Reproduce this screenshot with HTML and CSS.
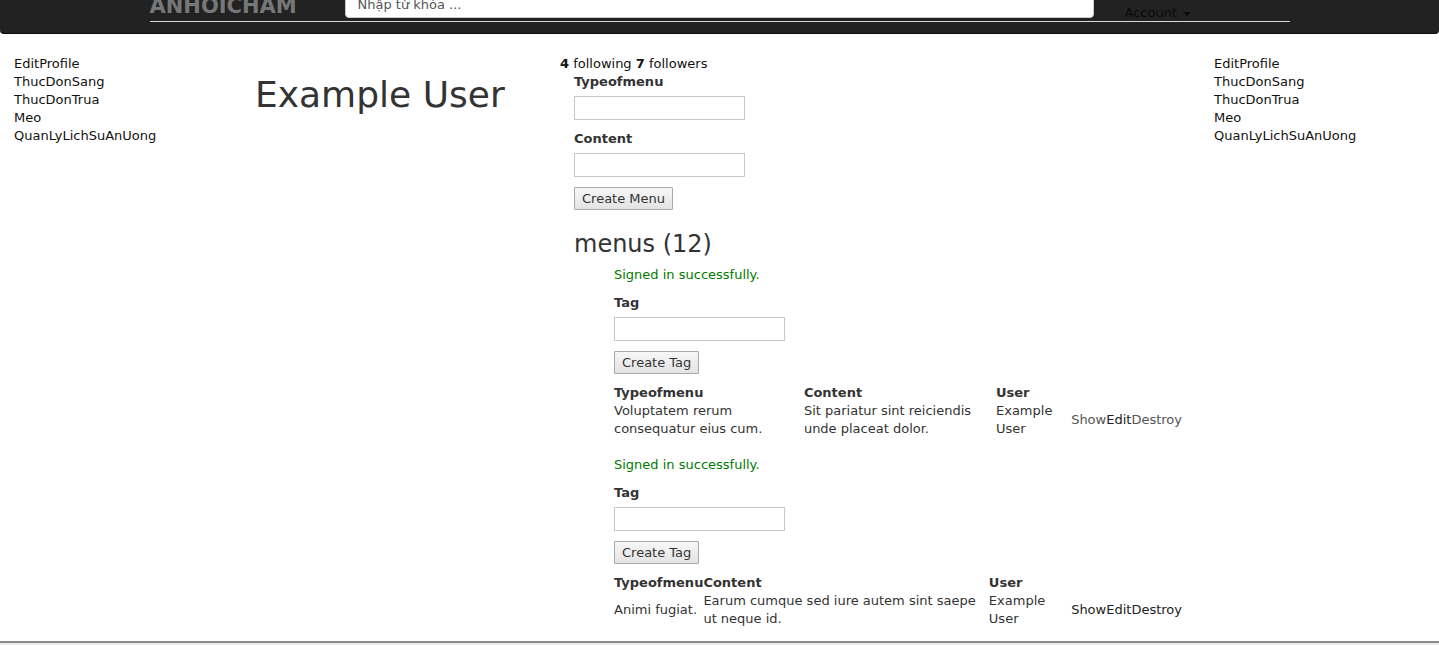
FILE: index.html
```html
<!DOCTYPE html>
<html lang="vi">
<head>
<meta charset="utf-8">
<title>Example User</title>
<link rel="stylesheet" href="styles.css">
</head>
<body>
<header class="navbar">
  <div class="nav-inner">
    <a class="brand" href="#">ANHOICHAM</a>
    <input class="search" type="text" placeholder="Nhập từ khóa ...">
    <a class="account" href="#">Account <span class="caret"></span></a>
  </div>
</header>

<main class="page">
  <nav class="side">
    <ul class="side-list">
      <li><a href="#">EditProfile</a></li>
      <li><a href="#">ThucDonSang</a></li>
      <li><a href="#">ThucDonTrua</a></li>
      <li><a href="#">Meo</a></li>
      <li><a href="#">QuanLyLichSuAnUong</a></li>
    </ul>
  </nav>

  <section class="profile">
    <h1 class="user-name">Example User</h1>
  </section>

  <section class="content">
    <div class="stats"><b>4</b> following <b>7</b> followers</div>
    <div class="menu-area">
      <form class="form">
        <label class="label">Typeofmenu</label>
        <input class="field" type="text">
        <label class="label">Content</label>
        <input class="field" type="text">
        <button class="btn" type="button">Create Menu</button>
      </form>

      <h3 class="menus-title">menus (12)</h3>
      <ul class="menus">
        <li class="menu-item">
          <p class="notice">Signed in successfully.</p>
          <form class="form">
            <label class="label">Tag</label>
            <input class="field" type="text">
            <button class="btn" type="button">Create Tag</button>
          </form>
          <table class="menu-table">
            <thead>
              <tr><th>Typeofmenu</th><th>Content</th><th>User</th><th></th></tr>
            </thead>
            <tbody>
              <tr>
                <td>Voluptatem rerum consequatur eius cum.</td>
                <td>Sit pariatur sint reiciendis unde placeat dolor.</td>
                <td>Example User</td>
                <td class="actions"><a class="act visited" href="#">Show</a><a class="act" href="#">Edit</a><a class="act visited" href="#">Destroy</a></td>
              </tr>
            </tbody>
          </table>
        </li>
        <li class="menu-item">
          <p class="notice">Signed in successfully.</p>
          <form class="form">
            <label class="label">Tag</label>
            <input class="field" type="text">
            <button class="btn" type="button">Create Tag</button>
          </form>
          <table class="menu-table">
            <thead>
              <tr><th>Typeofmenu</th><th>Content</th><th>User</th><th></th></tr>
            </thead>
            <tbody>
              <tr>
                <td>Animi fugiat.</td>
                <td>Earum cumque sed iure autem sint saepe ut neque id.</td>
                <td>Example User</td>
                <td class="actions"><a class="act" href="#">Show</a><a class="act" href="#">Edit</a><a class="act" href="#">Destroy</a></td>
              </tr>
            </tbody>
          </table>
        </li>
      </ul>
    </div>
  </section>

  <nav class="side">
    <ul class="side-list">
      <li><a href="#">EditProfile</a></li>
      <li><a href="#">ThucDonSang</a></li>
      <li><a href="#">ThucDonTrua</a></li>
      <li><a href="#">Meo</a></li>
      <li><a href="#">QuanLyLichSuAnUong</a></li>
    </ul>
  </nav>
</main>

<footer class="footer"></footer>
</body>
</html>
```

FILE: styles.css
```css
* { box-sizing: border-box; }

html, body {
  margin: 0;
  padding: 0;
}

body {
  font-family: "DejaVu Sans", Verdana, sans-serif;
  font-size: 13px;
  line-height: 18px;
  color: #333;
  background: #fff;
}

a { text-decoration: none; color: #111; }

/* ---------- navbar ---------- */
.navbar {
  height: 34px;
  background: #222;
  border-bottom: 1px solid #0c0c0c;
  border-radius: 0 0 4px 4px;
  overflow: hidden;
}

.nav-inner {
  width: 1140px;
  height: 22px;
  margin: 0 auto;
  display: flex;
  align-items: flex-end;
  border-bottom: 1px solid #d8d8d8;
}

.brand {
  width: 195px;
  flex: none;
  font-size: 21px;
  font-weight: bold;
  line-height: 21px;
  color: #777;
  margin-bottom: 4px;
}

.search {
  flex: none;
  width: 749px;
  height: 28px;
  margin-bottom: 3px;
  padding: 0 12px;
  border: 1px solid #ccc;
  border-radius: 4px;
  background: #fff;
  font-family: "DejaVu Sans", Verdana, sans-serif;
  font-size: 13px;
  color: #555;
}
.search::placeholder { color: #555; }

.account {
  flex: none;
  margin-left: 31px;
  margin-bottom: -1px;
  color: #0a0a0a;
  font-size: 13px;
  line-height: 18px;
}

.caret {
  display: inline-block;
  width: 0;
  height: 0;
  vertical-align: middle;
  margin-left: 2px;
  border-top: 4px solid #0a0a0a;
  border-left: 4px solid transparent;
  border-right: 4px solid transparent;
}

/* ---------- page grid ---------- */
.page {
  display: grid;
  grid-template-columns: 241px 305px 654px 1fr;
  padding: 21px 0 0 14px;
}

.side-list {
  list-style: none;
  margin: 0;
  padding: 0;
}

.user-name {
  margin: 20px 0 0;
  font-size: 36px;
  line-height: 40px;
  font-weight: normal;
  color: #333;
}

.stats { color: #111; }

.menu-area { padding-left: 14px; }

/* ---------- forms ---------- */
.form {
  display: flex;
  flex-direction: column;
  align-items: flex-start;
  margin: 0 0 10px;
}

.label {
  display: block;
  font-weight: bold;
  margin-bottom: 5px;
}

.field {
  width: 171px;
  height: 24px;
  margin: 0 0 10px;
  border: 1px solid #c8c8c8;
  background: #fff;
  padding: 0 4px;
  font-family: inherit;
  font-size: 13px;
}

.btn {
  height: 23px;
  padding: 0 7px;
  border: 1px solid #a9a9a9;
  border-radius: 1px;
  background: linear-gradient(#f7f7f7, #e3e3e3);
  font-family: "DejaVu Sans", Verdana, sans-serif;
  font-size: 13px;
  color: #333;
}

.menus-title {
  margin: 16px 0 4px;
  font-size: 24px;
  line-height: 36px;
  font-weight: normal;
  color: #333;
}

.menus {
  list-style: none;
  margin: 0;
  padding: 0 0 0 40px;
}

.menu-item + .menu-item { margin-top: 18px; }

.notice {
  margin: 0 0 10px;
  color: #007a00;
}

/* ---------- table ---------- */
.menu-table {
  width: 568px;
  border-collapse: collapse;
  border-spacing: 0;
}

.menu-table th,
.menu-table td {
  padding: 0;
  text-align: left;
  vertical-align: middle;
}

.menu-table th { font-weight: bold; }

.actions { white-space: nowrap; }

.act { color: #222; }
.act.visited { color: #555; }

/* ---------- footer ---------- */
.footer {
  margin-top: 13px;
  height: 40px;
  border-top: 2px solid #8a8a8a;
  background: #ececec;
}
```
